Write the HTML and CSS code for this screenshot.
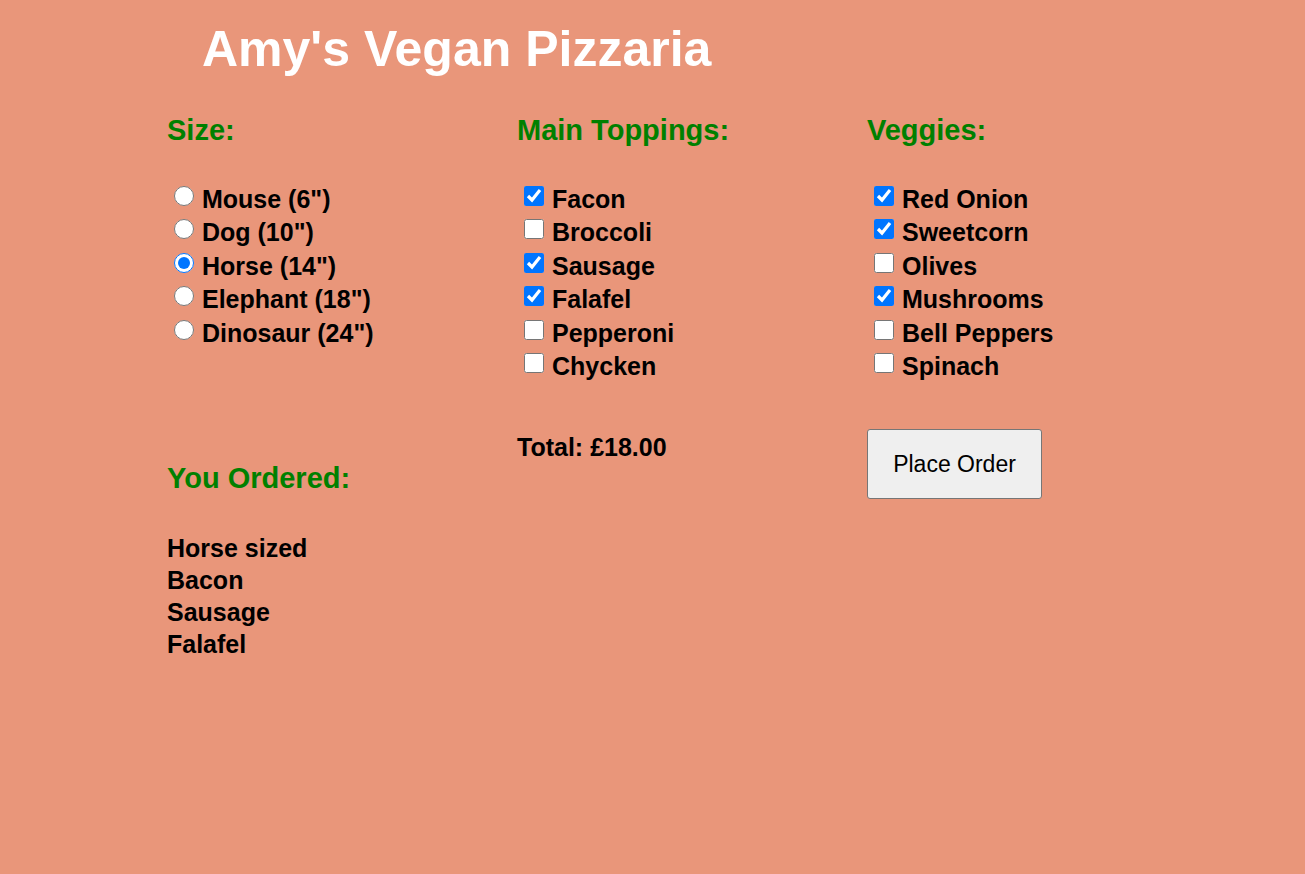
FILE: index.html
```html
<!DOCTYPE html>
<html>
<head>
<meta charset="utf-8">
<title>Amy's Vegan Pizzaria</title>
<link rel="stylesheet" href="styles.css">
</head>
<body>
<div class="page">
  <h1 class="title">Amy's Vegan Pizzaria</h1>
  <div class="grid">
    <section class="col">
      <h2 class="heading">Size:</h2>
      <ul class="opts">
        <li><label><input type="radio" name="size"> Mouse (6")</label></li>
        <li><label><input type="radio" name="size"> Dog (10")</label></li>
        <li><label><input type="radio" name="size" checked> Horse (14")</label></li>
        <li><label><input type="radio" name="size"> Elephant (18")</label></li>
        <li><label><input type="radio" name="size"> Dinosaur (24")</label></li>
      </ul>
    </section>
    <section class="col">
      <h2 class="heading">Main Toppings:</h2>
      <ul class="opts">
        <li><label><input type="checkbox" checked> Facon</label></li>
        <li><label><input type="checkbox"> Broccoli</label></li>
        <li><label><input type="checkbox" checked> Sausage</label></li>
        <li><label><input type="checkbox" checked> Falafel</label></li>
        <li><label><input type="checkbox"> Pepperoni</label></li>
        <li><label><input type="checkbox"> Chycken</label></li>
      </ul>
    </section>
    <section class="col">
      <h2 class="heading">Veggies:</h2>
      <ul class="opts">
        <li><label><input type="checkbox" checked> Red Onion</label></li>
        <li><label><input type="checkbox" checked> Sweetcorn</label></li>
        <li><label><input type="checkbox"> Olives</label></li>
        <li><label><input type="checkbox" checked> Mushrooms</label></li>
        <li><label><input type="checkbox"> Bell Peppers</label></li>
        <li><label><input type="checkbox"> Spinach</label></li>
      </ul>
    </section>
    <section class="col ordered">
      <h2 class="heading">You Ordered:</h2>
      <div class="summary">
        <div>Horse sized</div>
        <div>Bacon</div>
        <div>Sausage</div>
        <div>Falafel</div>
      </div>
    </section>
    <section class="col totalcol">
      <div class="total">Total: £18.00</div>
    </section>
    <section class="col btncol">
      <button class="order">Place Order</button>
    </section>
  </div>
</div>
</body>
</html>
```

FILE: styles.css
```css
html, body {
  margin: 0;
  padding: 0;
  background: #e9967a;
}
body {
  font-family: "Liberation Sans", Arial, sans-serif;
  font-weight: bold;
  color: #000;
}
.page {
  padding-left: 167px;
}
.title {
  margin: 0;
  padding: 20px 0 0 35px;
  font-size: 50px;
  line-height: 58px;
  color: #fff;
}
.grid {
  display: grid;
  grid-template-columns: 350px 350px 350px;
  margin-top: 36px;
}
.heading {
  margin: 0;
  font-size: 29px;
  line-height: 32px;
  color: #008000;
}
.opts {
  list-style: none;
  margin: 38px 0 0 0;
  padding: 0 0 0 7px;
}
.opts li {
  height: 33.4px;
  font-size: 25px;
  line-height: 30px;
}
.opts label {
  display: flex;
  align-items: flex-start;
  gap: 8px;
}
.opts input {
  width: 20px;
  height: 20px;
  margin: 2px 0 0 0;
  flex: none;
}
.ordered {
  margin-top: 78px;
}
.summary {
  margin-top: 38px;
  font-size: 25px;
  line-height: 32px;
}
.total {
  margin-top: 48px;
  font-size: 25px;
  line-height: 30px;
}
.btncol {
  padding-top: 45px;
}
.order {
  width: 175px;
  height: 70px;
  font-family: "Liberation Sans", Arial, sans-serif;
  font-weight: normal;
  font-size: 23px;
  background: #efefef;
  border: 1px solid #767676;
  border-radius: 3px;
  color: #000;
}
```
